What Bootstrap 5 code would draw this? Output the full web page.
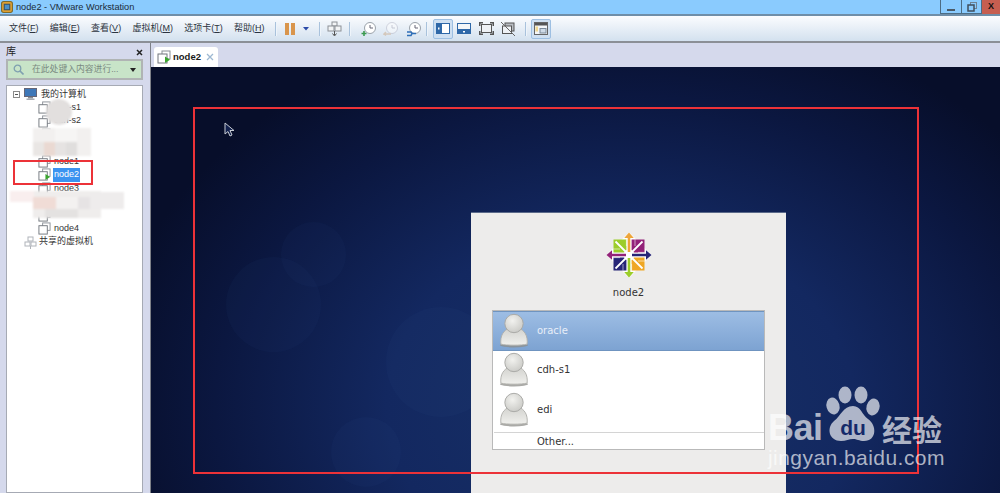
<!DOCTYPE html>
<html lang="zh-CN">
<head>
    <meta charset="UTF-8">
    <meta name="viewport" content="width=device-width, initial-scale=1.0">
    <title>node2 - VMware Workstation</title>
    <link href="https://cdn.jsdelivr.net/npm/bootstrap@5.3.3/dist/css/bootstrap.min.css" rel="stylesheet">
    <style>
        html, body { height: 493px; overflow: hidden; }
        body { position: relative; background: #d5d9ec; font: 9.5px/1.2 "Liberation Sans", "Noto Sans CJK SC", sans-serif; color: #222; }
        .vm-title { height: 16px; background: #8acbfe; border-bottom: 2px solid #6f8ea8; font-size: 9.2px; line-height: 15px; color: #1c2a38; }
        .vm-title .vm-logo { margin: 1px 3px 0 1px; }
        .win-btn { width: 22px; height: 14px; border: 1px solid #4c6c84; border-top: 0; }
        .win-btn + .win-btn { border-left: 0; width: 20px; }
        .win-close { width: 18px; height: 14px; background: #c65e50; color: #111; font-size: 9px; font-weight: 700; line-height: 12px; text-align: center; overflow: hidden; }
        .vm-toolbar { height: 27px; background: linear-gradient(#fbfcfe, #d3e1ef); border-bottom: 2px solid #8b8f96; }
        .menu-entry { white-space: nowrap; color: #2c3440; font-size: 9px; line-height: 25px; margin-right: 11.3px; }
        .menu-entry:first-child { margin-left: 9px; }
        .menu-entry.menu-last { margin-right: 3px; }
        .tool-sep { width: 1px; height: 14px; background: #a9c2dc; margin: 0 7px; box-shadow: 1px 0 0 #eef4fa; }
        .sep-wide { margin-left: 10px; }
        .sep-tight { margin: 0 6px 0 4px; }
        .sep-last { margin: 0 5px; }
        .tool-on { width: 20px; height: 20px; background: #cfe0f2; border: 1px solid #9dbfe2; border-radius: 2px; }
        .tool-slot { width: 22.5px; height: 20px; }
        .snap-gap { margin-left: 6.5px; }
        .pause-icon { margin-left: 2px; }
        .vm-side { width: 150px; height: 450px; padding: 0 7px 0 6px; }
        .side-head { height: 16px; padding-top: 2px; font-size: 10px; }
        .side-search { height: 21px; background: #c8e4c8; border: 2px solid #b0b4b4; color: #7a8a80; padding: 0 5px; font-size: 8.8px; }
        .vm-tree { margin-top: 5px; height: 408px; background: #fff; border: 1px solid #a6aab4; padding-top: 1.5px; }
        .tree-row { height: 13.45px; line-height: 13.45px; font-size: 9px; white-space: nowrap; color: #333; }
        .tree-child { padding-left: 31px; }
        .tree-child svg { margin-right: 3px; }
        .tree-sel { background: #3b93f0; color: #fff; padding: 0 1px; margin-left: -1px; }
        .tree-toggle { width: 7px; height: 7px; border: 1px solid #8a8a8a; position: relative; margin: 0 4px 0 6px; flex: none; }
        .tree-toggle::after { content: ""; position: absolute; left: 1px; right: 1px; top: 2px; height: 1px; background: #555; }
        .tree-shared { margin-left: 17px; margin-right: 2px; }
        .vm-main { width: 850px; height: 450px; border-left: 1px solid #7d8088; }
        .tab-strip { height: 24px; padding: 4px 0 0 3px; }
        .vm-tab { width: 64px; height: 20px; background: #fff; border-radius: 3px 3px 0 0; padding: 0 4px 0 3px; font-weight: 700; font-size: 9.5px; color: #1a1a1a; }
        .vm-tab > svg:first-child { margin-right: 2px; }
        .tab-x { margin-left: auto; margin-right: 0; }
        .vm-screen { height: 426px; padding: 145px 0 0 320px; overflow: hidden; position: relative;
            background: radial-gradient(ellipse 520px 400px at 470px 340px, #183268 0%, #132860 45%, #0b1740 78%, #070e2a 100%), #050a1c; }
        .bokeh { position: absolute; border-radius: 50%; background: rgba(70,110,180,.045); }
        .login-box { position: relative; width: 315px; height: 281px; background: #edeceb; font-family: "DejaVu Sans", sans-serif; font-size: 10px; color: #333; padding-top: 18px; border-top: 1px solid #5b6a8a; }
        .login-host { line-height: 12px; margin-top: 8px; height: 23px; }
        .user-list { width: 273px; height: 140px; margin-left: 21px; background: #fff; border: 1px solid #b9b9b9; }
        .user-row { height: 39.5px; padding-left: 6px; }
        .user-row span { margin-left: 8px; }
        .user-on { background: linear-gradient(#9dbde4, #7da3d2); border-top: 1px solid #6f94c0; border-bottom: 1px solid #6f94c0; color: #e8eef8; }
        .user-other { border-top: 1px solid #d4d4d4; margin: 2px 0 0 1px; height: 18px; padding-left: 43px; line-height: 17px; }
        .red-mark { position: absolute; border: 2px solid #ec3238; pointer-events: none; }
        .mark-big { left: 193px; top: 107px; width: 726px; height: 367px; }
        .mark-small { left: 13px; top: 160px; width: 80px; height: 25px; }
        .mosaic { position: absolute; filter: blur(1.2px); }
        .cursor-arrow { position: absolute; left: 224px; top: 122px; }
        .baidu-mark { position: absolute; left: 768px; top: 386px; width: 190px; height: 90px; color: rgba(255,255,255,.66); }
        .bai-word { position: absolute; left: 0; top: 27px; font: 700 36px/30px "Liberation Sans", sans-serif; letter-spacing: -.5px; }
        .jy-word { position: absolute; left: 114px; top: 27px; font: 700 30px/30px "Noto Sans CJK SC", sans-serif; white-space: nowrap; }
        .jy-url { position: absolute; left: 0; top: 60px; font: 21px/24px "Liberation Sans", sans-serif; white-space: nowrap; letter-spacing: .45px; }
        .paw-svg { position: absolute; left: 54px; top: 0; }
    </style>
</head>
<body>
    <svg width="0" height="0" class="position-absolute">
        <defs>
            <radialGradient id="head-fill" cx=".42" cy=".35" r=".7"><stop offset="0" stop-color="#f2f2ef"/><stop offset="1" stop-color="#c9c9c5"/></radialGradient>
            <linearGradient id="body-fill" x1="0" y1="0" x2="0" y2="1"><stop offset="0" stop-color="#d2d2ce"/><stop offset="1" stop-color="#f0f0ed"/></linearGradient>
        </defs>
        <symbol id="vm-icon" viewBox="0 0 14 14">
            <rect x="5" y="1" width="8" height="8" fill="#fff" stroke="#8a8f96"/>
            <rect x="1" y="4" width="9" height="9" fill="#fff" stroke="#70757c"/>
        </symbol>
        <symbol id="vm-run" viewBox="0 0 14 14">
            <rect x="5" y="1" width="8" height="8" fill="#fff" stroke="#8a8f96"/>
            <rect x="1" y="4" width="9" height="9" fill="#fff" stroke="#70757c"/>
            <path d="M8 6.500v6.500l5-3.200z" fill="#3aa62e"/>
        </symbol>
        <symbol id="user-pic" viewBox="0 0 32 36">
            <ellipse cx="16" cy="33" rx="15" ry="2.500" fill="#8e8e8a" opacity=".75"/>
            <path d="M2 32c-1-9 3-15 9-17h10c6 2 10 8 9 17-6 1.500-22 1.500-28 0z" fill="url(#body-fill)" stroke="#b0b0ac"/>
            <circle cx="16" cy="10" r="9.800" fill="url(#head-fill)" stroke="#a8a8a4"/>
        </symbol>
        <symbol id="centos-part" viewBox="-24 -24 48 48" overflow="visible">
            <path d="M-1.300-3V-17H-4.800L0-22.500 4.800-17H1.300V-3z" fill="var(--arrow)"/>
            <path d="M2.600-15.500H15.500V-2.600H5L2.600-5z" fill="var(--square)"/>
            <path d="M2.500-2.500 13.500-13.500" stroke="#fff" stroke-width="1.800"/>
            <path d="M6-15.500V-9M9-2.600H15.500" stroke="#fff" stroke-width=".7" opacity=".8"/>
        </symbol>
    </svg>

    <header class="vm-title d-flex align-items-start">
        <svg class="vm-logo" width="12" height="12" viewBox="0 0 11 11"><rect x=".5" y=".5" width="10" height="10" rx="2" fill="#e0a030" stroke="#7b6a30"/><rect x="3" y="3" width="5" height="5" fill="#4a90c8" stroke="#33536e"/></svg>
        <span>node2 - VMware Workstation</span>
        <div class="ms-auto d-flex">
            <div class="win-btn d-flex align-items-end justify-content-center"><svg width="9" height="8" viewBox="0 0 9 8"><rect x="0" y="4" width="8" height="2" fill="#4a5a68"/></svg></div>
            <div class="win-btn d-flex align-items-center justify-content-center"><svg width="10" height="10" viewBox="0 0 10 10"><rect x="3.500" y=".5" width="6" height="6" fill="none" stroke="#6f8294"/><rect x="1" y="3" width="6" height="6" fill="#8acbfe" stroke="#3f4e5c" stroke-width="1.500"/></svg></div>
            <div class="win-close">X</div>
        </div>
    </header>

    <nav class="vm-toolbar d-flex align-items-center">
        <span class="menu-entry">文件(<u>F</u>)</span>
        <span class="menu-entry">编辑(<u>E</u>)</span>
        <span class="menu-entry">查看(<u>V</u>)</span>
        <span class="menu-entry">虚拟机(<u>M</u>)</span>
        <span class="menu-entry">选项卡(<u>T</u>)</span>
        <span class="menu-entry menu-last">帮助(<u>H</u>)</span>
        <div class="tool-sep"></div>
        <svg class="pause-icon" width="24" height="12" viewBox="0 0 24 12"><rect x="0" y="0" width="4" height="12" fill="#d9954c"/><rect x="6" y="0" width="4" height="12" fill="#d9954c"/><path d="M18 4h6l-3 3.500z" fill="#2b4aa8"/></svg>
        <div class="tool-sep sep-wide"></div>
        <svg width="15" height="16" viewBox="0 0 15 16"><rect x="5" y="1" width="5" height="4" fill="#f2f4f6" stroke="#8b9096"/><rect x="1" y="5" width="6" height="5" fill="#f2f4f6" stroke="#8b9096"/><rect x="8" y="5" width="6" height="5" fill="#f2f4f6" stroke="#8b9096"/><path d="M7.500 10v4M5.500 12.500l2 2.500 2-2.500" fill="none" stroke="#555"/></svg>
        <div class="tool-sep"></div>
        <svg class="ms-1" width="16" height="16" viewBox="0 0 16 16"><circle cx="9" cy="7" r="5.500" fill="#fff" stroke="#9aa2aa"/><path d="M9 4v3h3" fill="none" stroke="#667"/><path d="M3 10v5M.5 12.500h5" stroke="#3c9a50" stroke-width="1.600"/></svg>
        <svg class="snap-gap" width="16" height="16" viewBox="0 0 16 16" opacity=".45"><circle cx="9" cy="7" r="5.500" fill="#fff" stroke="#aab"/><path d="M9 4v3h3" fill="none" stroke="#99a"/><path d="M8 13H1l2-2M1 13l2 1.500" fill="none" stroke="#c8a078" stroke-width="1.400"/></svg>
        <svg class="snap-gap" width="16" height="16" viewBox="0 0 16 16"><circle cx="9" cy="7" r="5.500" fill="#fff" stroke="#9aa2aa"/><path d="M9 4v3h3" fill="none" stroke="#667"/><path d="M1 11h4l1 1.500H10M1 14.500h4l1-2" fill="none" stroke="#2f6fb8" stroke-width="1.600"/></svg>
        <div class="tool-sep sep-tight"></div>
        <div class="tool-on d-flex align-items-center justify-content-center"><svg width="14" height="11" viewBox="0 0 14 11"><rect width="14" height="11" fill="#2f68a8"/><rect x="6" y="1" width="7" height="9" fill="#fff"/><rect x="2" y="4.500" width="1.500" height="2" fill="#fff"/></svg></div>
        <div class="tool-slot d-flex align-items-center justify-content-center"><svg width="14" height="11" viewBox="0 0 14 11"><rect width="14" height="11" fill="#2f68a8"/><rect x="1" y="1" width="12" height="5" fill="#f4f6f8"/><rect x="6" y="8" width="2" height="1.500" fill="#fff"/></svg></div>
        <div class="tool-slot d-flex align-items-center justify-content-center"><svg width="15" height="13" viewBox="0 0 15 13"><rect x="2.500" y="2.500" width="10" height="8" fill="#eef1f5" stroke="#555"/><path d="M0 0h4v1.500H1.500V4H0zM15 0h-4v1.500h2.500V4H15zM0 13h4v-1.500H1.500V9H0zM15 13h-4v-1.500h2.500V9H15z" fill="#555"/></svg></div>
        <div class="tool-slot d-flex align-items-center justify-content-center"><svg width="15" height="14" viewBox="0 0 15 14"><rect x="4" y="1" width="9" height="8" fill="#b8bcc2" stroke="#555"/><rect x="1.500" y="4" width="9" height="7.500" fill="#eef1f5" stroke="#555"/><path d="M0 0l14 14" stroke="#666"/></svg></div>
        <div class="tool-sep sep-last"></div>
        <div class="tool-on d-flex align-items-center justify-content-center"><svg width="14" height="13" viewBox="0 0 14 13"><rect x=".5" y=".5" width="13" height="12" fill="#f4f6f8" stroke="#666"/><rect x="1" y="1" width="12" height="2.500" fill="#555"/><rect x="1.500" y="4.500" width="2.500" height="5" fill="#f0d890"/><rect x="6" y="6.500" width="6" height="4.500" fill="#cfdbe8" stroke="#7b8a9a"/></svg></div>
    </nav>

    <div class="d-flex">
        <aside class="vm-side">
            <div class="side-head d-flex align-items-center justify-content-between">
                <span>库</span>
                <svg width="7" height="7" viewBox="0 0 7 7"><path d="M1 1l5 5M6 1L1 6" stroke="#222" stroke-width="1.500"/></svg>
            </div>
            <div class="side-search d-flex align-items-center">
                <svg width="11" height="11" viewBox="0 0 11 11"><circle cx="4.500" cy="4.500" r="3.300" fill="none" stroke="#7fa0b0" stroke-width="1.300"/><path d="M7 7l3.500 3.500" stroke="#7fa0b0" stroke-width="1.600"/></svg>
                <span class="ms-2">在此处键入内容进行...</span>
                <svg class="ms-auto" width="6" height="4" viewBox="0 0 6 4"><path d="M0 0h6L3 4z" fill="#222"/></svg>
            </div>
            <div class="vm-tree">
                <div class="tree-row d-flex align-items-center">
                    <div class="tree-toggle"></div>
                    <svg width="13" height="12" viewBox="0 0 13 12" class="me-1"><rect x=".5" y=".5" width="12" height="8" fill="#3f78b8" stroke="#667"/><rect x="4" y="9" width="5" height="1.500" fill="#8a8f96"/><rect x="2.500" y="10.500" width="8" height="1.500" fill="#a8acb2"/></svg>
                    <span>我的计算机</span>
                </div>
                <div class="tree-row tree-child d-flex align-items-center"><svg width="13" height="13"><use href="#vm-icon"/></svg><span>cdh-s1</span></div>
                <div class="tree-row tree-child d-flex align-items-center"><svg width="13" height="13"><use href="#vm-icon"/></svg><span>cdh-s2</span></div>
                <div class="tree-row tree-child d-flex align-items-center"><svg width="13" height="13"><use href="#vm-icon"/></svg></div>
                <div class="tree-row tree-child d-flex align-items-center"><svg width="13" height="13"><use href="#vm-icon"/></svg></div>
                <div class="tree-row tree-child d-flex align-items-center"><svg width="13" height="13"><use href="#vm-icon"/></svg><span>node1</span></div>
                <div class="tree-row tree-child d-flex align-items-center"><svg width="13" height="13"><use href="#vm-run"/></svg><span class="tree-sel">node2</span></div>
                <div class="tree-row tree-child d-flex align-items-center"><svg width="13" height="13"><use href="#vm-icon"/></svg><span>node3</span></div>
                <div class="tree-row tree-child d-flex align-items-center"><svg width="13" height="13"><use href="#vm-icon"/></svg></div>
                <div class="tree-row tree-child d-flex align-items-center"><svg width="13" height="13"><use href="#vm-icon"/></svg></div>
                <div class="tree-row tree-child d-flex align-items-center"><svg width="13" height="13"><use href="#vm-icon"/></svg><span>node4</span></div>
                <div class="tree-row d-flex align-items-center">
                    <svg width="13" height="13" viewBox="0 0 13 13" class="tree-shared"><rect x="4" y="1" width="5" height="4" fill="#fff" stroke="#b0b4ba"/><rect x="1" y="6" width="5" height="4" fill="#fff" stroke="#b0b4ba"/><rect x="7" y="6" width="5" height="4" fill="#fff" stroke="#b0b4ba"/><path d="M6.500 10v3" stroke="#b0b4ba"/></svg>
                    <span>共享的虚拟机</span>
                </div>
            </div>
        </aside>

        <main class="vm-main">
            <div class="tab-strip d-flex">
                <div class="vm-tab d-flex align-items-center">
                    <svg width="14" height="14"><use href="#vm-run"/></svg>
                    <span>node2</span>
                    <svg class="tab-x" width="8" height="8" viewBox="0 0 8 8"><path d="M1 1l6 6M7 1L1 7" stroke="#9db8d2" stroke-width="1.300"/></svg>
                </div>
            </div>
            <div class="vm-screen">
                <div class="bokeh" style="left:130px;top:155px;width:65px;height:65px"></div>
                <div class="bokeh" style="left:75px;top:190px;width:95px;height:95px"></div>
                <div class="bokeh" style="left:235px;top:240px;width:110px;height:110px"></div>
                <div class="bokeh" style="left:180px;top:350px;width:70px;height:70px"></div>
                <div class="login-box">
                    <div class="d-flex justify-content-center">
                        <svg width="48" height="48" viewBox="-24 -24 48 48">
                            <rect x="-16" y="-16" width="32" height="32" fill="#fff" transform="rotate(45)"/>
                            <use href="#centos-part" x="-24" y="-24" width="48" height="48" style="--arrow:#eda53a;--square:#932279"/>
                            <use href="#centos-part" x="-24" y="-24" width="48" height="48" transform="rotate(90)" style="--arrow:#262577;--square:#efa724"/>
                            <use href="#centos-part" x="-24" y="-24" width="48" height="48" transform="rotate(180)" style="--arrow:#9ccd2a;--square:#262577"/>
                            <use href="#centos-part" x="-24" y="-24" width="48" height="48" transform="rotate(270)" style="--arrow:#932279;--square:#9ccd2a"/>
                            <circle r="2.500" fill="#fff"/>
                        </svg>
                    </div>
                    <div class="login-host text-center">node2</div>
                    <div class="user-list">
                        <div class="user-row user-on d-flex align-items-center"><svg width="30" height="36"><use href="#user-pic"/></svg><span>oracle</span></div>
                        <div class="user-row d-flex align-items-center"><svg width="30" height="36"><use href="#user-pic"/></svg><span>cdh-s1</span></div>
                        <div class="user-row d-flex align-items-center"><svg width="30" height="36"><use href="#user-pic"/></svg><span>edi</span></div>
                        <div class="user-other">Other...</div>
                    </div>
                </div>
            </div>
        </main>
    </div>

    <svg class="mosaic" style="left:44px;top:98px" width="30" height="29" viewBox="0 0 30 29"><ellipse cx="15" cy="14" rx="13" ry="13" fill="#e2dfde"/></svg>
    <svg class="mosaic" style="left:33px;top:128px" width="58" height="28" viewBox="0 0 58 28">
        <rect width="58" height="28" fill="#f2f0ef"/><rect width="11" height="14" y="14" fill="#e9e6e4"/><rect x="11" y="14" width="11" height="14" fill="#ead9d2"/><rect x="22" y="14" width="11" height="14" fill="#e6e3e2"/><rect x="33" y="14" width="11" height="14" fill="#e0dedd"/><rect x="22" y="0" width="22" height="14" fill="#f6f5f4"/>
    </svg>
    <svg class="mosaic" style="left:10px;top:191px" width="114" height="27" viewBox="0 4 114 27">
        <rect x="23" y="4" width="68" height="27" fill="#efedec"/><rect x="0" y="4" width="24" height="11" fill="#f9eeee"/><rect x="23" y="10" width="23" height="12" fill="#f0dcd6"/><rect x="46" y="10" width="22" height="12" fill="#f3f1f0"/><rect x="68" y="10" width="12" height="12" fill="#e6e3e4"/><rect x="80" y="5" width="34" height="17" fill="#eeecec"/><rect x="35" y="22" width="33" height="9" fill="#e4e2e1"/>
    </svg>
    <div class="red-mark mark-small"></div>
    <div class="red-mark mark-big"></div>
    <svg class="cursor-arrow" width="11" height="15" viewBox="0 0 11 15"><path d="M1 1v11l3-2.500 2 4.500 2-1-2-4.500h4z" fill="#12204c" stroke="#c8ccd4"/></svg>

    <div class="baidu-mark">
        <span class="bai-word">Bai</span>
        <svg class="paw-svg" width="66" height="64" viewBox="0 0 66 64">
            <ellipse cx="11" cy="20" rx="6.500" ry="8.500" fill="currentColor" transform="rotate(-15 11 20)"/>
            <ellipse cx="23" cy="9" rx="6.500" ry="8.500" fill="currentColor"/>
            <ellipse cx="39" cy="9" rx="6.500" ry="8.500" fill="currentColor"/>
            <ellipse cx="51" cy="21" rx="6.500" ry="8.500" fill="currentColor" transform="rotate(15 51 21)"/>
            <path d="M31 20c8 0 9 9 15 13 9 6 9 22-4 22-5 0-7-2-11-2s-7 2-12 2C7 55 4 42 12 35c7-5 9-15 19-15z" fill="currentColor"/>
            <text x="31" y="49" text-anchor="middle" font-family="Liberation Sans" font-size="21" font-weight="700" fill="#15296a">du</text>
        </svg>
        <span class="jy-word">经验</span>
        <span class="jy-url">jingyan.baidu.com</span>
    </div>
    <script src="https://cdn.jsdelivr.net/npm/bootstrap@5.3.3/dist/js/bootstrap.bundle.min.js"></script>
</body>
</html>
